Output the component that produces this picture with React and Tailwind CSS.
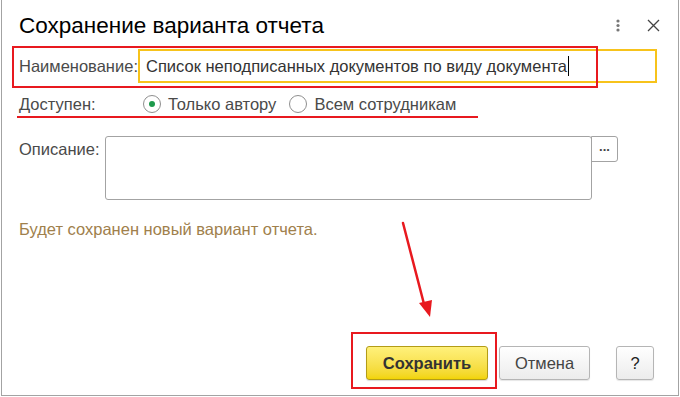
import { useState } from 'react';

function Radio({ checked, label, onClick }) {
  return (
    <button type="button" onClick={onClick} className="flex items-center gap-[7px]">
      <span className="flex h-[18px] w-[18px] items-center justify-center rounded-full border border-[#8f8f8f] bg-white">
        {checked && <span className="h-[6px] w-[6px] rounded-full bg-[#1d9a4c]" />}
      </span>
      <span>{label}</span>
    </button>
  );
}

export default function App() {
  const [access, setAccess] = useState('author');

  return (
    <div className="relative h-[397px] w-[680px] overflow-hidden bg-white font-['Liberation_Sans',Arial,sans-serif] text-[16.5px] leading-[19px] text-[#4a4a4a]">
      <div className="ml-px flex h-[396px] w-[678px] flex-col border-x border-b border-[#a3a3a3] bg-white">
        <div className="flex items-start justify-between pl-[17px] pr-[18px] pt-[13px]">
          <h1 className="text-[22.5px] leading-[26px] text-black">Сохранение варианта отчета</h1>
          <div className="mt-[6px] flex items-center gap-[26px]">
            <svg width="6" height="13" viewBox="0 0 6 13">
              <circle cx="3" cy="2" r="1.6" fill="#777" />
              <circle cx="3" cy="6.5" r="1.6" fill="#777" />
              <circle cx="3" cy="11" r="1.6" fill="#777" />
            </svg>
            <svg width="13" height="13" viewBox="0 0 13 13">
              <path d="M1 1 L12 12 M12 1 L1 12" stroke="#444" strokeWidth="1.3" />
            </svg>
          </div>
        </div>

        <div className="mt-[10px] flex h-[34px] items-center pl-[17px]">
          <span className="w-[119px]">Наименование:</span>
          <div className="flex h-[34px] w-[519px] items-center border-2 border-[#f7c31b] px-[6px] text-[#333]">
            Список неподписанных документов по виду документа
            <span className="ml-px h-[20px] w-px bg-black" />
          </div>
        </div>

        <div className="mt-[11px] flex h-[20px] items-center pl-[17px]">
          <span className="w-[124px]">Доступен:</span>
          <div className="flex items-center gap-[13px]">
            <Radio checked={access === 'author'} label="Только автору" onClick={() => setAccess('author')} />
            <Radio checked={access === 'all'} label="Всем сотрудникам" onClick={() => setAccess('all')} />
          </div>
        </div>

        <div className="mt-[22px] flex items-start pl-[17px]">
          <span className="w-[86px] pt-[4px]">Описание:</span>
          <textarea className="h-[64px] w-[487px] resize-none rounded-[3px] border border-[#a3a3a3] outline-none" />
          <button type="button" className="-ml-px flex h-[26px] w-[27px] items-center justify-center rounded-r-[3px] border border-[#a3a3a3] pb-[6px] text-[13px] font-bold leading-none text-[#444]">
            ...
          </button>
        </div>

        <p className="mt-[20px] pl-[17px] text-[#a0804c]">Будет сохранен новый вариант отчета.</p>

        <div className="mt-auto mb-[15px] flex items-center justify-end gap-[11px] pr-[24px]">
          <button type="button" className="h-[34px] w-[122px] rounded-[3px] border border-[#b39c17] bg-gradient-to-b from-[#fff17a] to-[#f2d400] font-bold text-[#333] shadow-[0_1px_1px_rgba(0,0,0,0.15)]">
            Сохранить
          </button>
          <button type="button" className="h-[34px] w-[91px] rounded-[3px] border border-[#b5b5b5] bg-gradient-to-b from-white to-[#ececec] text-[#444] shadow-[0_1px_1px_rgba(0,0,0,0.1)]">
            Отмена
          </button>
          <button type="button" className="ml-[15px] h-[34px] w-[38px] rounded-[3px] border border-[#b5b5b5] bg-gradient-to-b from-white to-[#ececec] text-[#222] shadow-[0_1px_1px_rgba(0,0,0,0.1)]">
            ?
          </button>
        </div>
      </div>

      {/* annotation overlays */}
      <div className="pointer-events-none absolute left-[12px] top-[46px] h-[42px] w-[586px] border-2 border-[#e8191f]" />
      <div className="pointer-events-none absolute left-[17px] top-[116px] h-[2px] w-[461px] bg-[#e8191f]" />
      <div className="pointer-events-none absolute left-[351px] top-[332px] h-[57px] w-[146px] border-2 border-[#e8191f]" />
      <svg className="pointer-events-none absolute left-[395px] top-[218px]" width="45" height="104" viewBox="0 0 45 104">
        <path d="M8 5 L29 86" stroke="#e8191f" strokeWidth="2.5" strokeLinecap="round" />
        <path d="M24 85 L37 82 L35 99 Z" fill="#e8191f" />
      </svg>
    </div>
  );
}
